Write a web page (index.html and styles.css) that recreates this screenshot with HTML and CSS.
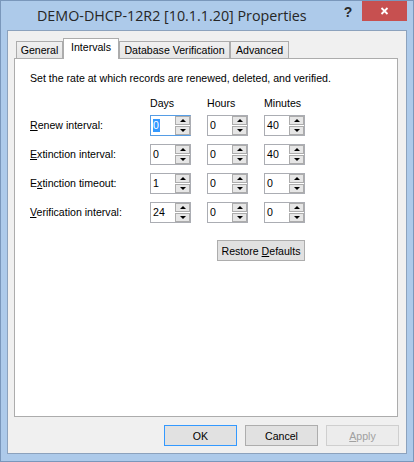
FILE: index.html
```
<!DOCTYPE html>
<html>
<head>
<meta charset="utf-8">
<link rel="stylesheet" href="styles.css">
</head>
<body>
<div class="window">
  <div class="titlebar">
    <div class="title">DEMO-DHCP-12R2 [10.1.1.20] Properties</div>
    <div class="help">?</div>
    <div class="close"><svg width="45" height="20" viewBox="0 0 45 20"><path d="M19.5 7 L25.5 13 M25.5 7 L19.5 13" stroke="#fff" stroke-width="1.8" fill="none"/></svg></div>
  </div>
  <div class="client">
    <div class="tabs">
      <div class="tab t-general">General</div>
      <div class="tab sel t-intervals">Intervals</div>
      <div class="tab t-db">Database Verification</div>
      <div class="tab t-adv">Advanced</div>
    </div>
    <div class="panel">
      <p class="desc">Set the rate at which records are renewed, deleted, and verified.</p>
      <div class="grid">
        <div></div><div class="hdr">Days</div><div class="hdr">Hours</div><div class="hdr">Minutes</div>

        <div class="lbl"><u>R</u>enew interval:</div>
        <div class="spin focus"><div class="val"><span class="selv">0</span></div><div class="btns"><div class="ub"><i class="up"></i></div><div class="ub"><i class="dn"></i></div></div></div>
        <div class="spin"><div class="val">0</div><div class="btns"><div class="ub"><i class="up"></i></div><div class="ub"><i class="dn"></i></div></div></div>
        <div class="spin"><div class="val">40</div><div class="btns"><div class="ub"><i class="up"></i></div><div class="ub"><i class="dn"></i></div></div></div>

        <div class="lbl"><u>E</u>xtinction interval:</div>
        <div class="spin"><div class="val">0</div><div class="btns"><div class="ub"><i class="up"></i></div><div class="ub"><i class="dn"></i></div></div></div>
        <div class="spin"><div class="val">0</div><div class="btns"><div class="ub"><i class="up"></i></div><div class="ub"><i class="dn"></i></div></div></div>
        <div class="spin"><div class="val">40</div><div class="btns"><div class="ub"><i class="up"></i></div><div class="ub"><i class="dn"></i></div></div></div>

        <div class="lbl">E<u>x</u>tinction timeout:</div>
        <div class="spin"><div class="val">1</div><div class="btns"><div class="ub"><i class="up"></i></div><div class="ub"><i class="dn"></i></div></div></div>
        <div class="spin"><div class="val">0</div><div class="btns"><div class="ub"><i class="up"></i></div><div class="ub"><i class="dn"></i></div></div></div>
        <div class="spin"><div class="val">0</div><div class="btns"><div class="ub"><i class="up"></i></div><div class="ub"><i class="dn"></i></div></div></div>

        <div class="lbl"><u>V</u>erification interval:</div>
        <div class="spin"><div class="val">24</div><div class="btns"><div class="ub"><i class="up"></i></div><div class="ub"><i class="dn"></i></div></div></div>
        <div class="spin"><div class="val">0</div><div class="btns"><div class="ub"><i class="up"></i></div><div class="ub"><i class="dn"></i></div></div></div>
        <div class="spin"><div class="val">0</div><div class="btns"><div class="ub"><i class="up"></i></div><div class="ub"><i class="dn"></i></div></div></div>
      </div>
      <div class="restore-row"><button class="btn restore">Restore <u>D</u>efaults</button></div>
    </div>
    <div class="actions">
      <button class="btn act ok">OK</button>
      <button class="btn act">Cancel</button>
      <button class="btn act disabled"><u>A</u>pply</button>
    </div>
  </div>
</div>
</body>
</html>
```
FILE: styles.css
```
html, body { margin: 0; padding: 0; }
body {
  font-family: "Liberation Sans", Arial, sans-serif;
  font-size: 10.6px;
  color: #000;
  background: #fff;
}
.window {
  width: 414px;
  height: 462px;
  box-sizing: border-box;
  border: 1px solid #7a97bb;
  background: #adcaea;
  display: flex;
  flex-direction: column;
}
.titlebar {
  height: 29px;
  flex: none;
  display: flex;
}
.title {
  flex: 1;
  padding-left: 36px;
  font-family: "Open Sans", "Noto Sans", sans-serif;
  font-size: 14.3px;
  line-height: 29px;
  color: #262626;
  white-space: nowrap;
}
.help {
  width: 28px;
  text-align: center;
  font-family: "Liberation Sans", Arial, sans-serif;
  font-weight: bold;
  font-size: 14px;
  line-height: 14px;
  padding-top: 4px;
  color: #2b2b2b;
}
.close {
  width: 45px;
  height: 20px;
  margin-right: 6px;
  background: #c75050;
}
.close svg { display: block; }
.client {
  flex: none;
  height: 424px;
  box-sizing: border-box;
  margin: 0 6px;
  border: 1px solid #8ca2bd;
  background: #f0f0f0;
  padding: 7px 8px 7px 6px;
  display: flex;
  flex-direction: column;
}
.tabs {
  display: flex;
  align-items: flex-end;
  height: 20px;
  padding-left: 2px;
  flex: none;
}
.tab {
  box-sizing: border-box;
  height: 17px;
  border: 1px solid #acacac;
  border-bottom: none;
  background: linear-gradient(#f0f0f0, #e5e5e5);
  text-align: center;
  padding-top: 1px;
  line-height: 15px;
  white-space: nowrap;
}
.tab.sel {
  height: 21px;
  background: #fff;
  margin-bottom: -1px;
  position: relative;
  z-index: 1;
}
.t-general { width: 47px; }
.t-intervals { width: 56px; }
.t-db { width: 111px; }
.t-adv { width: 59px; }
.panel {
  flex: none;
  height: 359px;
  box-sizing: border-box;
  border: 1px solid #acacac;
  background: #fff;
  padding: 13px 0 0 15px;
}
.desc {
  margin: 0;
  line-height: 13px;
  white-space: nowrap;
}
.grid {
  display: grid;
  grid-template-columns: 104px 41px 41px 41px;
  grid-template-rows: 10px repeat(4, 21px);
  column-gap: 16px;
  row-gap: 8px;
  margin-top: 12px;
  width: 275px;
}
.hdr { line-height: 13px; white-space: nowrap; }
.lbl { line-height: 21px; white-space: nowrap; }
.spin {
  box-sizing: border-box;
  border: 1px solid #abadb3;
  display: flex;
  background: #fff;
}
.spin.focus { border-color: #569de5 #abadb3 #569de5 #569de5; }
.val {
  flex: 1;
  padding-left: 2px;
  line-height: 19px;
}
.selv {
  display: inline-block;
  background: #3399ff;
  color: #fff;
  line-height: 13px;
  padding: 0 1px 0 0;
}
.btns {
  width: 15px;
  display: flex;
  flex-direction: column;
  gap: 1px;
}
.ub {
  flex: 1;
  box-sizing: border-box;
  border: 1px solid #acacac;
  background: #e6e6e6;
  display: flex;
  align-items: center;
  justify-content: center;
}
.up, .dn {
  display: block;
  width: 0;
  height: 0;
  border-left: 3px solid transparent;
  border-right: 3px solid transparent;
}
.up { border-bottom: 3px solid #000; }
.dn { border-top: 3px solid #000; }
.restore-row {
  display: flex;
  justify-content: flex-end;
  width: 275px;
  margin-top: 17px;
}
.btn {
  box-sizing: border-box;
  height: 21px;
  border: 1px solid #adadad;
  background: #e1e1e1;
  font-family: "Liberation Sans", Arial, sans-serif;
  font-size: 10.6px;
  color: #000;
  padding: 0;
  margin: 0;
}
.restore { width: 88px; }
.actions {
  display: flex;
  justify-content: flex-end;
  gap: 8px;
  margin-top: 8px;
  margin-right: -1px;
  flex: none;
}
.act { width: 73px; }
.ok { border-color: #3399ff; }
.disabled {
  border-color: #cfcfcf;
  background: #ececec;
  color: #a0a0a0;
}
```
